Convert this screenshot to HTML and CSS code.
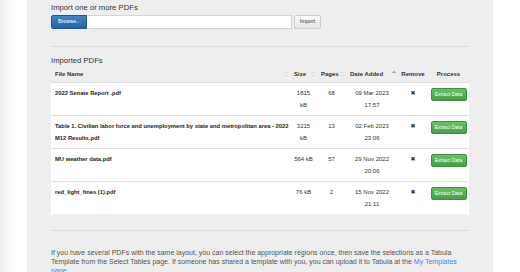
FILE: index.html
```html
<!DOCTYPE html>
<html lang="en">
<head>
  <meta charset="UTF-8">
  <meta name="viewport" content="width=device-width, initial-scale=1.0">
  <title>Tabula - My Files</title>
  <link rel="stylesheet" href="styles.css">
</head>
<body>
  <div class="gutter"></div>

  <main class="panel">
    <h3 class="first">Import one or more PDFs</h3>
    <form class="upload" onsubmit="return false">
      <span class="btn btn-primary">Browse...</span>
      <span class="file-name"></span>
      <button class="btn btn-default" type="submit">Import</button>
    </form>

    <hr>

    <h3>Imported PDFs</h3>
    <table class="files">
      <colgroup>
        <col class="c-name"><col class="c-size"><col class="c-pages">
        <col class="c-date"><col class="c-remove"><col class="c-process">
      </colgroup>
      <thead>
        <tr>
          <th><div class="sort">File Name <svg class="arrows" viewBox="0 0 4 8"><path d="M0.5 3L2 1.5L3.5 3M0.5 5L2 6.5L3.5 5"/></svg></div></th>
          <th><div class="sort">Size <svg class="arrows" viewBox="0 0 4 8"><path d="M0.5 3L2 1.5L3.5 3M0.5 5L2 6.5L3.5 5"/></svg></div></th>
          <th><div class="sort">Pages <svg class="arrows" viewBox="0 0 4 8"><path d="M0.5 3L2 1.5L3.5 3M0.5 5L2 6.5L3.5 5"/></svg></div></th>
          <th><div class="sort">Date Added <svg class="arrows active" viewBox="0 0 4 8"><path d="M0.5 3L2 1.5L3.5 3"/></svg></div></th>
          <th class="center">Remove</th>
          <th class="center">Process</th>
        </tr>
      </thead>
      <tbody>
        <tr>
          <td class="name">2022 Senate Report .pdf</td>
          <td class="center size">1815 kB</td>
          <td class="center">68</td>
          <td class="center">09 Mar 2023 17:57</td>
          <td class="center"><span class="remove">&#x2716;</span></td>
          <td class="center"><button class="btn btn-success">Extract Data</button></td>
        </tr>
        <tr>
          <td class="name">Table 1. Civilian labor force and unemployment by state and metropolitan area - 2022 M12 Results.pdf</td>
          <td class="center size">3215 kB</td>
          <td class="center">13</td>
          <td class="center">02 Feb 2023 23:06</td>
          <td class="center"><span class="remove">&#x2716;</span></td>
          <td class="center"><button class="btn btn-success">Extract Data</button></td>
        </tr>
        <tr>
          <td class="name">MU weather data.pdf</td>
          <td class="center size">564 kB</td>
          <td class="center">57</td>
          <td class="center">29 Nov 2022 20:06</td>
          <td class="center"><span class="remove">&#x2716;</span></td>
          <td class="center"><button class="btn btn-success">Extract Data</button></td>
        </tr>
        <tr>
          <td class="name">red_light_fines (1).pdf</td>
          <td class="center size">76 kB</td>
          <td class="center">2</td>
          <td class="center">15 Nov 2022 21:11</td>
          <td class="center"><span class="remove">&#x2716;</span></td>
          <td class="center"><button class="btn btn-success">Extract Data</button></td>
        </tr>
      </tbody>
    </table>

    <hr class="lower">

    <p class="help">If you have several PDFs with the same layout, you can select the appropriate regions once, then save the selections as a Tabula Template from the Select Tables page. If someone has shared a template with you, you can upload it to Tabula at the <a href="#">My Templates page</a>.</p>
  </main>
</body>
</html>
```

FILE: styles.css
```css
* { box-sizing: border-box; }
body {
  margin: 0;
  font-family: 'Liberation Sans', Arial, sans-serif;
  color: #333;
  background: #fff;
  display: flex;
  align-items: flex-start;
  height: 272px;
  overflow: hidden;
}
.gutter {
  width: 27px;
  align-self: stretch;
  background: linear-gradient(90deg, #ececec 0%, #fafafa 35%, #fff 60%);
}
.panel {
  width: 466px;
  background: #eeeeee;
  padding: 0 23px 40px 24px;
}
h3 {
  font-size: 7.7px;
  font-weight: normal;
  line-height: 11px;
  margin: 0;
  color: #333;
}
h3.first { padding-top: 2px; }

.upload {
  display: flex;
  margin: 2px 0 0;
  height: 14px;
}
.btn {
  font-family: 'Liberation Sans', Arial, sans-serif;
  font-size: 5.5px;
  line-height: 1;
  border-radius: 2px;
  cursor: pointer;
}
.btn-primary {
  display: flex;
  align-items: center;
  width: 36px;
  padding-left: 6px;
  color: #fff;
  background: linear-gradient(#3f86c8, #2362a8);
  border: 1px solid #1f5796;
  border-radius: 2px 0 0 2px;
}
.file-name {
  width: 205px;
  background: #fff;
  border: 1px solid #d4d4d4;
  border-left: 0;
}
.btn-default {
  width: 27px;
  margin-left: 2px;
  padding: 0;
  color: #333;
  background: linear-gradient(#fdfdfd, #e4e4e4);
  border: 1px solid #cfcfcf;
}

hr {
  margin: 17px 0 8px;
  border: 0;
  border-top: 1px solid #dcdcdc;
}
hr.lower { margin: 16px 0 17px; }

.files {
  width: 418px;
  border-collapse: collapse;
  table-layout: fixed;
}
.c-name { width: 239px; }
.c-size { width: 27px; }
.c-pages { width: 29px; }
.c-date { width: 52px; }
.c-remove { width: 30px; }
.c-process { width: 41px; }

.files th {
  height: 16px;
  padding: 0 2px 0 4px;
  font-size: 6px;
  font-weight: bold;
  text-align: left;
  white-space: nowrap;
  color: #333;
}
.files th.center { text-align: center; padding: 0; }
.sort {
  display: flex;
  align-items: center;
  justify-content: space-between;
}
.arrows {
  width: 4px;
  height: 8px;
  fill: none;
  stroke: #c4c4c4;
  stroke-width: 0.6;
}
.arrows.active { stroke: #555; stroke-width: 0.8; }

.files td {
  padding: 4px 3px 3px 4px;
  font-size: 6px;
  line-height: 12.5px;
  vertical-align: top;
  background: #fff;
  border-top: 1px solid #e0e0e0;
}
.files td.name {
  padding-right: 0;
  font-size: 5.8px;
  font-weight: bold;
  color: #222;
}
.files td.center { text-align: center; padding-left: 2px; padding-right: 2px; }
.files td.size { padding-left: 3.5px; padding-right: 3.5px; }
.remove {
  font-family: 'DejaVu Sans', sans-serif;
  font-size: 6px;
  color: #333;
}
.btn-success {
  width: 36px;
  height: 12.5px;
  margin-top: 1.5px;
  padding: 0;
  font-size: 5px;
  color: #fff;
  background: linear-gradient(#62c462, #4a9d4a);
  border: 1px solid #3f8f3f;
  vertical-align: top;
}

.help {
  margin: 0;
  font-size: 7px;
  line-height: 9.3px;
  color: #555;
}
.help a {
  color: #3a8ad6;
  text-decoration: none;
}
```
